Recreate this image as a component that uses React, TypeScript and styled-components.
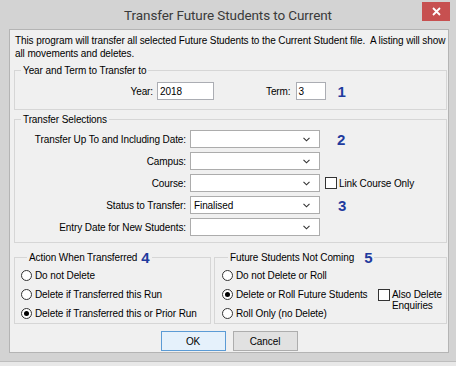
import React from 'react';
import styled, { createGlobalStyle } from 'styled-components';

const GlobalStyle = createGlobalStyle`
	html, body {
		margin: 0;
		padding: 0;
		background: #e8e8e8;
	}
	body {
		font-family: 'Liberation Sans', Arial, sans-serif;
		font-size: 10px;
		letter-spacing: -0.1px;
		color: #000;
	}
`;

const StyledWindow = styled.div`
	width: 456px;
	height: 362px;
	box-sizing: border-box;
	background: #d3d3d3;
	border-bottom: 1px solid #bdbdbd;
	display: flex;
	flex-direction: column;
`;

const StyledTitleBar = styled.div`
	height: 29px;
	display: grid;
	grid-template-columns: 1fr auto 1fr;
	align-items: center;
`;

const StyledTitle = styled.div`
	grid-column: 2;
	font-family: Roboto, 'Noto Sans', sans-serif;
	font-size: 13.5px;
	letter-spacing: -0.1px;
	color: #3a3a3a;
	padding-top: 1px;
`;

const StyledCloseButton = styled.div`
	grid-column: 3;
	justify-self: end;
	align-self: start;
	margin: 2px 6px 0 0;
	width: 28px;
	height: 19px;
	background: #c75050;
	display: flex;
	align-items: center;
	justify-content: center;
`;

const StyledClient = styled.div`
	flex: 1;
	margin: 0 7px 8px 9px;
	background: #f0f0f0;
	border: 1px solid #b4b4b4;
	padding: 4px 1px 0 4px;
	display: flex;
	flex-direction: column;
`;

const StyledIntro = styled.p`
	margin: 0 0 4px 1px;
	line-height: 13px;
	white-space: pre;
`;

const StyledGroup = styled.fieldset<{ $pad: string }>`
	margin: 0;
	min-width: 0;
	border: 1px solid #d6d6d6;
	padding: ${(p) => p.$pad};
`;

const StyledLegend = styled.legend`
	padding: 0 2px;
	margin-left: 6px;
	line-height: 13px;
	display: flex;
	align-items: center;
`;

const StyledYearRow = styled.div`
	display: flex;
	align-items: center;
	height: 18px;
`;

const StyledLabel = styled.label<{ $w?: number }>`
	width: ${(p) => (p.$w ? `${p.$w}px` : 'auto')};
	text-align: right;
	white-space: nowrap;
`;

const StyledTextBox = styled.div<{ $w: number }>`
	width: ${(p) => p.$w}px;
	height: 18px;
	box-sizing: border-box;
	background: #fff;
	border: 1px solid #abadb3;
	padding: 0 2px;
	display: flex;
	align-items: center;
`;

const StyledStep = styled.span<{ $ml: number }>`
	margin-left: ${(p) => p.$ml}px;
	color: #1f3b9e;
	font-weight: bold;
	font-size: 15px;
	line-height: 15px;
`;

const StyledSelGrid = styled.div`
	display: grid;
	grid-template-columns: 171px 130px auto;
	grid-auto-rows: 18px;
	column-gap: 4px;
	row-gap: 4px;
	align-items: center;
`;

const StyledCombo = styled.div`
	height: 18px;
	box-sizing: border-box;
	background: #fff;
	border: 1px solid #acacac;
	padding: 0 9px 0 3px;
	display: flex;
	align-items: center;
	justify-content: space-between;
`;

const StyledExtra = styled.div`
	display: flex;
	align-items: center;
	margin-left: 1px;
`;

const StyledCheck = styled.span`
	width: 12px;
	height: 12px;
	box-sizing: border-box;
	border: 1px solid #333;
	background: #fff;
	flex-shrink: 0;
`;

const StyledBottom = styled.div`
	display: flex;
	gap: 3px;
	margin-top: 7px;
`;

const StyledRadioList = styled.div`
	display: flex;
	flex-direction: column;
	gap: 2px;
`;

const StyledRadioRow = styled.div`
	display: flex;
	align-items: center;
	height: 17px;
	gap: 3px;
	white-space: nowrap;
`;

const StyledRadio = styled.span<{ $on?: boolean }>`
	width: 11px;
	height: 11px;
	box-sizing: border-box;
	border-radius: 50%;
	border: 1px solid #333;
	background: #fff;
	display: flex;
	align-items: center;
	justify-content: center;
	flex-shrink: 0;
	&::after {
		content: '';
		width: 5px;
		height: 5px;
		border-radius: 50%;
		background: ${(p) => (p.$on ? '#000' : 'transparent')};
	}
`;

const StyledNotComing = styled.div`
	display: grid;
	grid-template-columns: 1fr auto;
`;

const StyledAlsoDelete = styled.div`
	display: flex;
	align-items: flex-start;
	gap: 2px;
	margin: 22px 4px 0 0;
	line-height: 11px;
`;

const StyledButtons = styled.div`
	display: flex;
	justify-content: center;
	gap: 7px;
	margin-top: 7px;
	padding-right: 3px;
`;

const StyledButton = styled.div<{ $default?: boolean }>`
	width: 65px;
	height: 20px;
	box-sizing: border-box;
	display: flex;
	align-items: center;
	justify-content: center;
	background: ${(p) => (p.$default ? '#e5f1fb' : '#e1e1e1')};
	border: 1px solid ${(p) => (p.$default ? '#5b9bd5' : '#adadad')};
`;

const Chevron = () => (
	<svg width="7" height="5" viewBox="0 0 7 5">
		<path d="M0.5 0.8 L3.5 3.8 L6.5 0.8" fill="none" stroke="#333" strokeWidth="1.1" />
	</svg>
);

const selections = [
	{ label: 'Transfer Up To and Including Date:', value: '', extra: 'two' },
	{ label: 'Campus:', value: '', extra: '' },
	{ label: 'Course:', value: '', extra: 'link' },
	{ label: 'Status to Transfer:', value: 'Finalised', extra: 'three' },
	{ label: 'Entry Date for New Students:', value: '', extra: '' },
];

const App: React.FC = () => {
	return (
		<>
			<GlobalStyle />
			<StyledWindow>
				<StyledTitleBar>
					<StyledTitle>Transfer Future Students to Current</StyledTitle>
					<StyledCloseButton>
						<svg width="9" height="9" viewBox="0 0 9 9">
							<path d="M1 1 L8 8 M8 1 L1 8" stroke="#fff" strokeWidth="1.8" />
						</svg>
					</StyledCloseButton>
				</StyledTitleBar>
				<StyledClient>
					<StyledIntro>
						{'This program will transfer all selected Future Students to the Current Student file.  A listing will show\nall movements and deletes.'}
					</StyledIntro>

					<StyledGroup $pad="5px 0 9px 0">
						<StyledLegend>Year and Term to Transfer to</StyledLegend>
						<StyledYearRow>
							<StyledLabel $w={138}>Year:</StyledLabel>
							<StyledTextBox $w={57} style={{ marginLeft: 4 }}>2018</StyledTextBox>
							<StyledLabel style={{ marginLeft: 52 }}>Term:</StyledLabel>
							<StyledTextBox $w={30} style={{ marginLeft: 5 }}>3</StyledTextBox>
							<StyledStep $ml={12}>1</StyledStep>
						</StyledYearRow>
					</StyledGroup>

					<StyledGroup $pad="4px 0 6px 0" style={{ marginTop: 3 }}>
						<StyledLegend>Transfer Selections</StyledLegend>
						<StyledSelGrid>
							{selections.map((s) => (
								<React.Fragment key={s.label}>
									<StyledLabel>{s.label}</StyledLabel>
									<StyledCombo>
										<span>{s.value}</span>
										<Chevron />
									</StyledCombo>
									<StyledExtra>
										{s.extra === 'two' && <StyledStep $ml={12}>2</StyledStep>}
										{s.extra === 'three' && <StyledStep $ml={13}>3</StyledStep>}
										{s.extra === 'link' && (
											<>
												<StyledCheck />
												<span style={{ marginLeft: 2 }}>Link Course Only</span>
											</>
										)}
									</StyledExtra>
								</React.Fragment>
							))}
						</StyledSelGrid>
					</StyledGroup>

					<StyledBottom>
						<StyledGroup $pad="2px 0 1px 6px" style={{ width: 197, boxSizing: 'border-box' }}>
							<StyledLegend>
								Action When Transferred
								<StyledStep $ml={4}>4</StyledStep>
							</StyledLegend>
							<StyledRadioList>
								<StyledRadioRow>
									<StyledRadio />
									Do not Delete
								</StyledRadioRow>
								<StyledRadioRow>
									<StyledRadio />
									Delete if Transferred this Run
								</StyledRadioRow>
								<StyledRadioRow>
									<StyledRadio $on />
									Delete if Transferred this or Prior Run
								</StyledRadioRow>
							</StyledRadioList>
						</StyledGroup>

						<StyledGroup $pad="2px 0 1px 7px" style={{ flex: 1 }}>
							<StyledLegend>
								Future Students Not Coming
								<StyledStep $ml={10}>5</StyledStep>
							</StyledLegend>
							<StyledNotComing>
								<StyledRadioList>
									<StyledRadioRow>
										<StyledRadio />
										Do not Delete or Roll
									</StyledRadioRow>
									<StyledRadioRow>
										<StyledRadio $on />
										Delete or Roll Future Students
									</StyledRadioRow>
									<StyledRadioRow>
										<StyledRadio />
										Roll Only (no Delete)
									</StyledRadioRow>
								</StyledRadioList>
								<StyledAlsoDelete>
									<StyledCheck />
									<span>
										Also Delete
										<br />
										Enquiries
									</span>
								</StyledAlsoDelete>
							</StyledNotComing>
						</StyledGroup>
					</StyledBottom>

					<StyledButtons>
						<StyledButton $default>OK</StyledButton>
						<StyledButton>Cancel</StyledButton>
					</StyledButtons>
				</StyledClient>
			</StyledWindow>
		</>
	);
};

export default App;
